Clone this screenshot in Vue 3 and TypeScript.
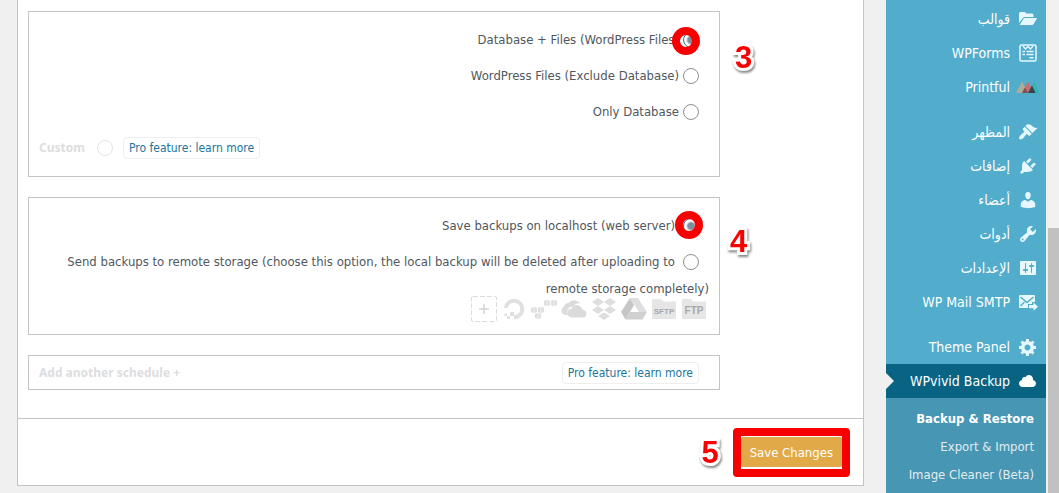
<script setup lang="ts">
import { ref } from 'vue'

interface MenuItem {
  label: string
  icon: string
  gapBefore?: boolean
  current?: boolean
  rtl?: boolean
}

const paths: Record<string, string> = {
  brush:
    'M14.48 11.06L7.41 3.99l1.5-1.5c.5-.56 2.3-.47 3.51.32 1.21.8 1.43 1.28 2.91 2.1 1.18.64 2.45 1.26 4.45.85zm-.71.71L6.7 4.7 4.93 6.47c-.39.39-.39 1.02 0 1.41l1.06 1.06c.39.39.39 1.03 0 1.42-.6.6-1.43 1.11-2.21 1.69-.35.26-.7.53-1.01.84C1.43 14.23.4 16.08 1.4 17.07c.99 1 2.84-.03 4.18-1.36.31-.31.58-.66.85-1.02.57-.78 1.08-1.61 1.69-2.21.39-.39 1.02-.39 1.41 0l1.06 1.06c.39.39 1.02.39 1.41 0z',
  plug:
    'M13.11 4.36L9.87 7.6 8 5.73l3.24-3.24c.35-.34 1.05-.2 1.56.32.52.51.66 1.21.31 1.55zm-8 1.77l.91-1.12 9.01 9.01-1.19.84c-.71.71-2.63 1.16-3.82 1.16H6.14L4.9 17.26c-.59.59-1.54.59-2.12 0-.59-.58-.59-1.53 0-2.12l1.24-1.24v-3.88c0-1.13.4-3.19 1.09-3.89zm7.26 3.97l3.24-3.24c.34-.35 1.04-.21 1.55.31.52.51.66 1.21.31 1.55l-3.24 3.25z',
  user:
    'M10 9.25c-2.27 0-2.73-3.44-2.73-3.44C7 4.02 7.82 2 9.97 2c2.16 0 2.98 2.02 2.71 3.81 0 0-.41 3.44-2.68 3.44zm0 2.57L12.72 10c2.39 0 4.52 2.33 4.52 4.53v2.49s-3.65 1.13-7.24 1.13c-3.65 0-7.24-1.13-7.24-1.13v-2.49c0-2.25 1.94-4.48 4.47-4.48z',
  wrench:
    'M16.68 9.77c-1.34 1.34-3.3 1.67-4.95.99l-5.41 6.52c-.99.99-2.59.99-3.58 0s-.99-2.59 0-3.57l6.52-5.42c-.68-1.65-.35-3.61.99-4.95 1.28-1.28 3.12-1.62 4.72-1.06l-2.89 2.89 2.82 2.82 2.86-2.87c.53 1.58.18 3.39-1.08 4.65zM3.81 16.21c.4.39 1.04.39 1.43 0 .4-.4.4-1.04 0-1.43-.39-.4-1.03-.4-1.43 0-.39.39-.39 1.03 0 1.43z',
  sliders:
    'M18 16V4c0-.55-.45-1-1-1H3c-.55 0-1 .45-1 1v12c0 .55.45 1 1 1h14c.55 0 1-.45 1-1zM8 11h1c.55 0 1 .45 1 1s-.45 1-1 1H8v1.5c0 .28-.22.5-.5.5s-.5-.22-.5-.5V13H6c-.55 0-1-.45-1-1s.45-1 1-1h1V5.5c0-.28.22-.5.5-.5s.5.22.5.5V11zm5-2h-1c-.55 0-1-.45-1-1s.45-1 1-1h1V5.5c0-.28.22-.5.5-.5s.5.22.5.5V7h1c.55 0 1 .45 1 1s-.45 1-1 1h-1v5.5c0 .28-.22.5-.5.5s-.5-.22-.5-.5V9z',
  gear:
    'M18 12h-2.18c-.17.7-.44 1.35-.81 1.93l1.54 1.54-2.1 2.1-1.54-1.54c-.58.36-1.23.63-1.91.79V19H8v-2.18c-.68-.16-1.33-.43-1.91-.79l-1.54 1.54-2.12-2.12 1.54-1.54c-.36-.58-.63-1.23-.79-1.91H1V9.03h2.17c.16-.7.44-1.35.8-1.94L2.43 5.55l2.1-2.1 1.54 1.54c.58-.37 1.24-.64 1.93-.81V2h3v2.18c.68.16 1.33.43 1.91.79l1.54-1.54 2.12 2.12-1.54 1.54c.36.59.64 1.24.8 1.94H18V12zm-8.5 1.5c1.66 0 3-1.34 3-3s-1.34-3-3-3-3 1.34-3 3 1.34 3 3 3z',
  cloud:
    'M14.9 9c1.8.2 3.1 1.7 3.1 3.5 0 1.9-1.6 3.5-3.5 3.5h-10C2.6 16 1 14.4 1 12.5 1 10.7 2.3 9.3 4.1 9 4 8.9 4 8.7 4 8.5 4 7.1 5.1 6 6.5 6c.3 0 .7.1.9.2C8.1 4.9 9.4 4 11 4c2.2 0 4 1.8 4 4 0 .4-.1.7-.1 1z',
  folder:
    'M1 14V4.500Q1 3 2.500 3H6.500Q8 3 8 4.500H14Q15.500 4.500 15.500 6V8H7Q5.500 8 4.700 9.200ZM1.600 16L5.500 9.800Q6 9 7 9H18.300Q19.300 9 18.700 10L15.600 15Q15 16 14 16Z',
}

const menu: MenuItem[] = [
  { label: 'قوالب', icon: 'folder', rtl: true },
  { label: 'WPForms', icon: 'forms' },
  { label: 'Printful', icon: 'printful' },
  { label: 'المظهر', icon: 'brush', gapBefore: true, rtl: true },
  { label: 'إضافات', icon: 'plug', rtl: true },
  { label: 'أعضاء', icon: 'user', rtl: true },
  { label: 'أدوات', icon: 'wrench', rtl: true },
  { label: 'الإعدادات', icon: 'sliders', rtl: true },
  { label: 'WP Mail SMTP', icon: 'mail' },
  { label: 'Theme Panel', icon: 'gear', gapBefore: true },
  { label: 'WPvivid Backup', icon: 'cloud', current: true },
]

const submenu = ['Backup & Restore', 'Export & Import', 'Image Cleaner (Beta)']

const content = ref('all')
const target = ref('local')
</script>

<template>
  <div class="page">
    <main class="main">
      <form class="panel" @submit.prevent>
        <div class="settings">
          <fieldset class="box">
            <label class="row">
              <span>Database + Files (WordPress Files)</span>
              <span class="pick">
                <input v-model="content" type="radio" name="content" value="all" />
                <i class="ring ring-near"></i>
              </span>
            </label>
            <label class="row">
              <span>WordPress Files (Exclude Database)</span>
              <span class="pick"><input v-model="content" type="radio" name="content" value="files" /></span>
            </label>
            <label class="row">
              <span>Only Database</span>
              <span class="pick"><input v-model="content" type="radio" name="content" value="db" /></span>
            </label>
            <div class="row row-pro">
              <label class="custom">Custom <input type="radio" name="content" value="custom" disabled /></label>
              <a class="pro" href="#pro">Pro feature: learn more</a>
            </div>
            <b class="step step-side step-three">3</b>
          </fieldset>

          <fieldset class="box">
            <label class="row row-local">
              <span>Save backups on localhost (web server)</span>
              <span class="pick">
                <input v-model="target" type="radio" name="target" value="local" />
                <i class="ring"></i>
              </span>
            </label>
            <label class="remote">
              <input v-model="target" type="radio" name="target" value="remote" />
              Send backups to remote storage (choose this option, the local backup will be deleted after uploading to remote storage completely)
            </label>
            <div class="storages">
              <svg viewBox="0 0 26 26"><rect x=".5" y=".5" width="25" height="25" rx="1.500" fill="none" stroke="#dcdcdc" stroke-dasharray="5 2" /><path d="M13 8v10M8 13h10" stroke="#d4d4d4" stroke-width="1.500" /></svg>
              <svg viewBox="0 0 26 26"><path d="M4.800 12A8.300 8.300 0 1 1 13 21.300" fill="none" stroke="#e0e0e0" stroke-width="4" /><path d="M9 16h4v4H9zM6 20h3v3H6zM3.500 17.500H6V20H3.500z" fill="#e0e0e0" /></svg>
              <svg viewBox="0 0 26 26" fill="#dedede">
                <g v-for="p in [[13, 5], [20, 5], [0, 12], [7, 12], [4, 18]]" :key="p.join()">
                  <path :d="`M${p[0]} ${p[1]}l2.700-1.200v6.400l-2.700-1.200zM${p[0] + 3.300} ${p[1] - 1.200}l2.700 1.200v4l-2.700 1.200z`" />
                </g>
              </svg>
              <svg viewBox="0 0 26 26" fill="#dbdbdb"><path d="M7 19H4.500A4.500 4.500 0 0 1 3 10.500A4.500 4.500 0 0 1 7.500 7A7 7 0 0 1 19 7.500Q15 6 12.500 10.500Q7 10.500 6.300 15Q5.500 17 7 19Z" /><path d="M11 21.500A4.500 4.500 0 0 1 10.500 12.500A5.500 5.500 0 0 1 20.500 12A4 4 0 0 1 22 14A3.800 3.800 0 0 1 22.500 21.500Z" /></svg>
              <svg viewBox="0 0 26 26" fill="#dedede"><path d="M7 2l6 4-6 4-6-4zM19 2l6 4-6 4-6-4zM7 10l6 4-6 4-6-4zM19 10l6 4-6 4-6-4zM13 16.500l6 3.500-6 4-6-4z" /></svg>
              <svg viewBox="0 0 26 26"><path d="M9 2h8l9 14h-8z" fill="#dedede" /><path d="M9 2l4 7L4.500 23.500 0 16z" fill="#c6c6c6" /><path d="M9 16h17l-4.500 7.500h-17z" fill="#d0d0d0" /></svg>
              <svg viewBox="0 0 26 26"><path d="M1 3h9l2 2.500h13V23H1z" fill="#e6e6e6" /><text x="13" y="18" text-anchor="middle" font-size="8">SFTP</text></svg>
              <svg viewBox="0 0 26 26"><path d="M1 3h9l2 2.500h13V23H1z" fill="#e6e6e6" /><text x="13" y="18" text-anchor="middle" font-size="10">FTP</text></svg>
            </div>
            <b class="step step-side step-four">4</b>
          </fieldset>

          <div class="box schedule">
            <span class="faded">Add another schedule +</span>
            <a class="pro" href="#pro">Pro feature: learn more</a>
          </div>
        </div>

        <footer class="actions">
          <b class="step">5</b>
          <span class="frame"><button class="save" type="submit">Save Changes</button></span>
        </footer>
      </form>
    </main>

    <nav class="sidebar">
      <a
        v-for="item in menu"
        :key="item.label"
        href="#menu"
        class="item"
        :class="{ gap: item.gapBefore, current: item.current }"
      >
        <span :dir="item.rtl ? 'rtl' : 'ltr'">{{ item.label }}</span>
        <svg v-if="item.icon === 'forms'" class="icon" viewBox="0 0 20 20" fill="none" stroke="currentColor">
          <rect x="2" y="2" width="16" height="16" rx="1.500" stroke-width="1.500" />
          <path d="M5 3l2.500 3L10 3.500 12.500 6 15 3M4.500 8.500H7M8.500 8.500h7M4.500 11.500H7M8.500 11.500h7M11.500 14.800h4" stroke-width="1.400" />
        </svg>
        <svg v-else-if="item.icon === 'printful'" class="icon icon-wide" viewBox="0 0 24 20">
          <path d="M0 16L6 4.500 12 16z" fill="#a9ad9b" />
          <path d="M12 16l6-11.500L24 16z" fill="#35b5b8" />
          <path d="M6 16l6-11.500L18 16z" fill="#cf6b6f" />
          <path d="M9 10.500L12 16H6z" fill="#7d5158" />
          <path d="M12 16l4-7.500L19.500 16z" fill="#31444f" />
        </svg>
        <svg v-else-if="item.icon === 'mail'" class="icon" viewBox="0 0 20 20">
          <path d="M2 3h14q1 0 1 1v6h-3v2H10v4H2q-1 0-1-1V4q0-1 1-1z" fill="currentColor" />
          <path d="M2.500 5L9 10.500 15.500 5M2.500 14l4-4" fill="none" stroke="#52accc" stroke-width="1.400" />
          <path d="M11 13h4.500v-2.500L20 14.700l-4.500 4V16.200H11z" fill="currentColor" />
        </svg>
        <svg v-else class="icon" viewBox="0 0 20 20" fill="currentColor"><path :d="paths[item.icon]" /></svg>
      </a>
      <div class="submenu">
        <a v-for="(name, i) in submenu" :key="name" href="#sub" :class="{ on: i === 0 }">{{ name }}</a>
      </div>
    </nav>
    <div class="scroll"><div class="thumb"></div></div>
  </div>
</template>

<style>
body {
  margin: 0;
  background: #f0f0f0;
}
</style>

<style scoped>
* {
  box-sizing: border-box;
}
.page {
  display: flex;
  height: 100vh;
  overflow: hidden;
  font-family: 'DejaVu Sans Condensed', 'DejaVu Sans', sans-serif;
  font-size: 13px;
  color: #50575e;
}
.main {
  flex: 1;
  min-width: 0;
  padding: 0 22px 0 17px;
}
.panel {
  background: #fff;
  border: 1px solid #c3c4c7;
  border-top: 0;
}
.settings {
  display: flex;
  flex-direction: column;
  gap: 20px;
  padding: 11px 143px 28px 10px;
}
.box {
  position: relative;
  min-width: 0;
  margin: 0;
  padding: 10px;
  border: 1px solid #c3c4c7;
}
.row {
  display: flex;
  align-items: center;
  justify-content: flex-end;
  gap: 4px;
  height: 36px;
  padding-right: 10px;
}
.row > span:first-child {
  padding-bottom: 2px;
}
.row-local {
  gap: 8px;
}
.row-pro {
  justify-content: flex-start;
  gap: 10px;
}
.pick {
  position: relative;
  display: flex;
}
input {
  appearance: none;
  flex: none;
  width: 16px;
  height: 16px;
  margin: 0;
  border: 1px solid #8c8f94;
  border-radius: 50%;
  background: #fff;
}
input:checked {
  border-color: #2f7291;
  background: radial-gradient(circle, #7e8c9b 3px, #fff 5px);
}
input:disabled {
  border-color: #e4e4e6;
}
.ring {
  position: absolute;
  top: -7px;
  left: -8px;
  width: 28px;
  height: 28px;
  border: 8px solid #f80000;
  border-radius: 50%;
}
.ring-near {
  top: -5px;
  left: -11px;
}
.custom {
  display: flex;
  align-items: center;
  gap: 12px;
}
.custom,
.faded {
  color: #dcdde0;
  font: bold 12px/20px 'Noto Sans', sans-serif;
}
.pro {
  height: 22px;
  padding: 0 5px;
  border: 1px solid #eeeeef;
  border-radius: 4px;
  color: #21759b;
  font-size: 12px;
  line-height: 20px;
  text-decoration: none;
}
.remote {
  display: block;
  margin-top: 4px;
  line-height: 27px;
  text-align: right;
}
.remote input {
  float: right;
  margin: 6px 10px 0 8px;
}
.storages {
  display: flex;
  justify-content: flex-end;
  gap: 4px;
  margin-top: -6px;
  padding: 0 2px 2px 0;
}
.storages svg {
  width: 26px;
  height: 26px;
}
.storages text {
  fill: #a8a8a8;
  font-family: 'Liberation Sans', sans-serif;
  font-weight: bold;
}
.schedule {
  display: flex;
  align-items: center;
  justify-content: space-between;
  height: 35px;
  padding: 0 20px 0 10px;
}
.step {
  color: #f80000;
  font: bold 31px/32px 'Liberation Sans', Arial, sans-serif;
  -webkit-text-stroke: 6px #fff;
  paint-order: stroke;
  filter: drop-shadow(1px 2px 1px #888);
}
.step-side {
  position: absolute;
  left: 100%;
}
.step-three {
  top: 30px;
  margin-left: 16px;
}
.step-four {
  top: 28px;
  margin-left: 11px;
}
.actions {
  display: flex;
  align-items: center;
  justify-content: flex-end;
  gap: 14px;
  padding: 9px 13px 8px;
  border-top: 1px solid #c3c4c7;
}
.frame {
  padding: 1px 0 2px;
  border: 8px solid #f80000;
  border-radius: 4px;
  background: #fff;
}
.save {
  display: block;
  height: 30px;
  padding: 0 9px;
  border: 0;
  border-radius: 2px;
  background: #e1a948;
  color: #fff;
  font: inherit;
}
.sidebar {
  flex: none;
  width: 160px;
  padding-top: 2px;
  overflow: hidden;
  background: #52accc;
  font-size: 14px;
}
.item {
  position: relative;
  display: flex;
  align-items: center;
  justify-content: flex-end;
  gap: 8px;
  height: 34px;
  padding-right: 8px;
  color: #fff;
  text-decoration: none;
}
.item.gap {
  margin-top: 11px;
}
.item.current {
  background: #096484;
}
.item.current::before {
  content: '';
  position: absolute;
  left: 0;
  border: 8px solid transparent;
  border-left-color: #f0f0f0;
}
.icon {
  flex: none;
  width: 20px;
  height: 20px;
  color: #e5f8ff;
}
.current .icon {
  color: #fff;
}
.icon-wide {
  width: 24px;
  margin: 0 -2px;
}
.submenu {
  display: flex;
  flex-direction: column;
  height: 100%;
  padding: 7px 12px 0;
  background: #4796b3;
  font-size: 13px;
  line-height: 28px;
  text-align: right;
}
.submenu a {
  color: #e2ecf1;
  text-decoration: none;
  white-space: nowrap;
}
.submenu .on {
  color: #fff;
  font-weight: bold;
}
.scroll {
  flex: none;
  width: 13px;
  padding: 228px 0 0 2px;
  background: #f1f1f1;
}
.thumb {
  height: 100%;
  background: #c1c1c1;
}
</style>
